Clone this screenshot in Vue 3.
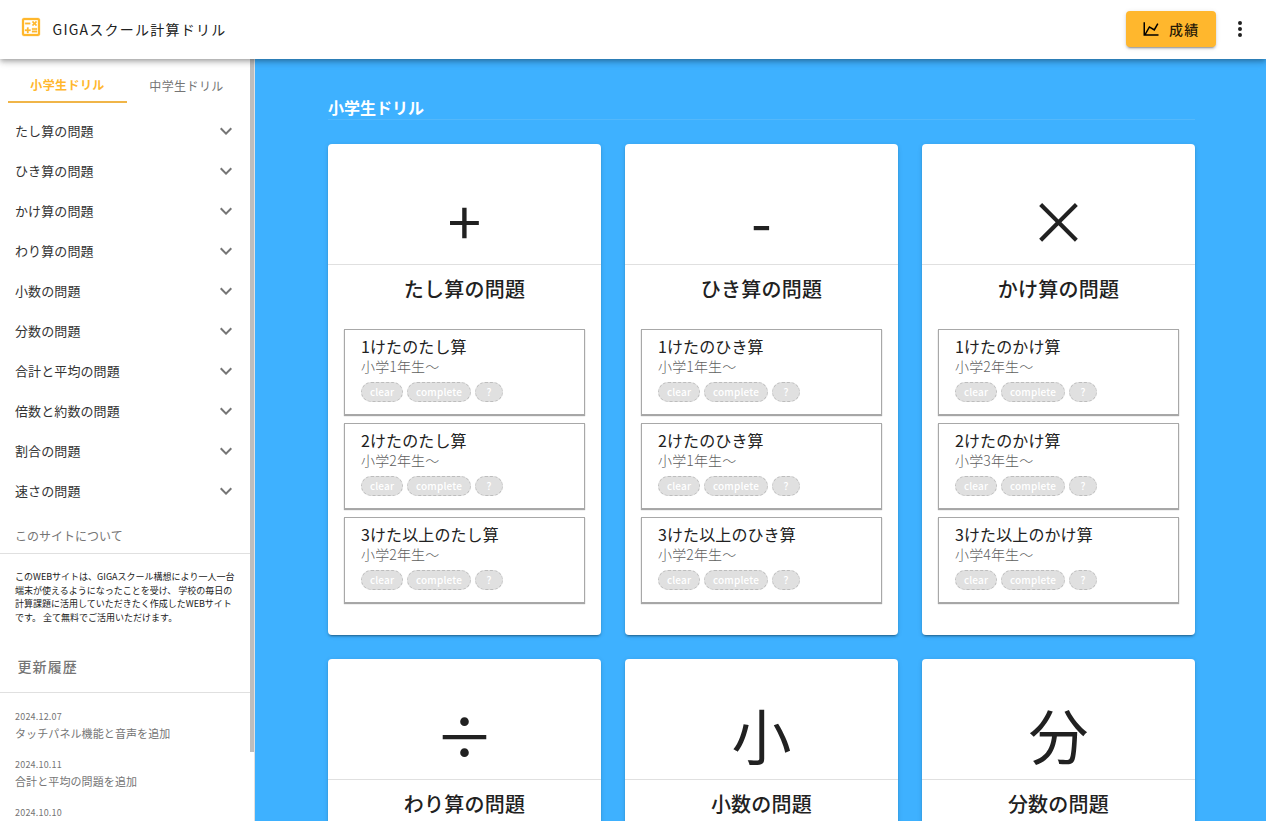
<script setup>
import { ref } from 'vue';

const tabs = ['小学生ドリル', '中学生ドリル'];
const activeTab = ref(0);

const menu = [
  'たし算の問題',
  'ひき算の問題',
  'かけ算の問題',
  'わり算の問題',
  '小数の問題',
  '分数の問題',
  '合計と平均の問題',
  '倍数と約数の問題',
  '割合の問題',
  '速さの問題',
];

const history = [
  { date: '2024.12.07', text: 'タッチパネル機能と音声を追加' },
  { date: '2024.10.11', text: '合計と平均の問題を追加' },
  { date: '2024.10.10', text: '' },
];

const cards = [
  {
    symbol: '+',
    title: 'たし算の問題',
    drills: [
      { name: '1けたのたし算', grade: '小学1年生～' },
      { name: '2けたのたし算', grade: '小学2年生～' },
      { name: '3けた以上のたし算', grade: '小学2年生～' },
    ],
  },
  {
    symbol: '-',
    title: 'ひき算の問題',
    drills: [
      { name: '1けたのひき算', grade: '小学1年生～' },
      { name: '2けたのひき算', grade: '小学1年生～' },
      { name: '3けた以上のひき算', grade: '小学2年生～' },
    ],
  },
  {
    symbol: '×',
    title: 'かけ算の問題',
    drills: [
      { name: '1けたのかけ算', grade: '小学2年生～' },
      { name: '2けたのかけ算', grade: '小学3年生～' },
      { name: '3けた以上のかけ算', grade: '小学4年生～' },
    ],
  },
  { symbol: '÷', title: 'わり算の問題', drills: [] },
  { symbol: '小', title: '小数の問題', drills: [] },
  { symbol: '分', title: '分数の問題', drills: [] },
];

const badges = [
  { name: 'clear', label: 'clear' },
  { name: 'complete', label: 'complete' },
  { name: 'unknown', label: '?' },
];
</script>

<template>
  <div class="app">
    <header class="app-bar">
      <svg class="logo" viewBox="0 0 24 24">
        <path d="M19,3H5C3.9,3 3,3.9 3,5V19C3,20.1 3.9,21 5,21H19C20.1,21 21,20.1 21,19V5C21,3.9 20.1,3 19,3M19,19H5V5H19V19M6.2,7.7H11.2V9.2H6.2V7.7M13,15.8H18V17.3H13V15.8M13,13.2H18V14.7H13V13.2M8,18H9.5V16H11.5V14.5H9.5V12.5H8V14.5H6V16H8V18M14.1,10.9L15.5,9.5L16.9,10.9L18,9.9L16.6,8.5L18,7.1L16.9,6L15.5,7.4L14.1,6L13,7.1L14.4,8.5L13,9.9L14.1,10.9Z" />
      </svg>
      <h1 class="app-title">GIGAスクール計算ドリル</h1>
      <button class="score-button">
        <svg viewBox="0 0 24 24">
          <path d="M16,11.78L20.24,4.45L21.97,5.45L16.74,14.5L10.23,10.75L5.46,19H22V21H2V3H4V17.54L9.5,8L16,11.78Z" />
        </svg>
        <span>成績</span>
      </button>
      <svg class="dots" viewBox="0 0 24 24">
        <path d="M12,16A2,2 0 0,1 14,18A2,2 0 0,1 12,20A2,2 0 0,1 10,18A2,2 0 0,1 12,16M12,10A2,2 0 0,1 14,12A2,2 0 0,1 12,14A2,2 0 0,1 10,12A2,2 0 0,1 12,10M12,4A2,2 0 0,1 14,6A2,2 0 0,1 12,8A2,2 0 0,1 10,6A2,2 0 0,1 12,4Z" />
      </svg>
    </header>

    <div class="body">
      <aside class="sidebar">
        <div class="side-content">
          <!-- Grade tabs -->
          <div class="tabs">
            <div
              v-for="(tab, i) in tabs"
              :key="tab"
              class="tab"
              :class="{ active: i === activeTab }"
              @click="activeTab = i"
            >
              {{ tab }}
            </div>
          </div>

          <!-- Drill menu -->
          <ul class="menu">
            <li v-for="item in menu" :key="item">
              <span>{{ item }}</span>
              <svg viewBox="0 0 24 24">
                <path d="M7.41,8.58L12,13.17L16.59,8.58L18,10L12,16L6,10L7.41,8.58Z" />
              </svg>
            </li>
          </ul>

          <h2 class="about-title">このサイトについて</h2>
          <p class="about">このWEBサイトは、GIGAスクール構想により一人一台端末が使えるようになったことを受け、 学校の毎日の計算課題に活用していただきたく作成したWEBサイトです。 全て無料でご活用いただけます。</p>

          <h2 class="history-title">更新履歴</h2>
          <div class="history">
            <div v-for="item in history" :key="item.date" class="history-item">
              <div class="date">{{ item.date }}</div>
              <div v-if="item.text" class="history-text">{{ item.text }}</div>
            </div>
          </div>
        </div>
        <div class="scroll-track">
          <div class="scroll-thumb"></div>
        </div>
      </aside>

      <main class="main">
        <h2 class="page-title">小学生ドリル</h2>
        <div class="cards">
          <section v-for="card in cards" :key="card.title" class="card">
            <div class="symbol">{{ card.symbol }}</div>
            <h3 class="card-title">{{ card.title }}</h3>
            <div class="drills">
              <div v-for="drill in card.drills" :key="drill.name" class="drill">
                <div class="drill-name">{{ drill.name }}</div>
                <div class="drill-grade">{{ drill.grade }}</div>
                <div class="badges">
                  <span v-for="badge in badges" :key="badge.name" class="badge" :class="badge.name">{{ badge.label }}</span>
                </div>
              </div>
            </div>
          </section>
        </div>
      </main>
    </div>
  </div>
</template>

<style>
body {
  margin: 0;
  overflow: hidden;
}
</style>

<style scoped>
* {
  box-sizing: border-box;
}

.app {
  height: 100vh;
  display: flex;
  flex-direction: column;
  overflow: hidden;
  font-family: "Noto Sans CJK JP", sans-serif;
  color: #212121;
  background: #fff;
}

.app-bar {
  position: relative;
  z-index: 1;
  flex: none;
  height: 59px;
  display: flex;
  align-items: center;
  padding: 0 14px 1px 19px;
  background: #fff;
  box-shadow: 0 2px 4px -1px rgba(0, 0, 0, 0.2), 0 4px 5px rgba(0, 0, 0, 0.14), 0 1px 10px rgba(0, 0, 0, 0.12);
}

.logo {
  width: 24px;
  height: 24px;
  margin-bottom: 4px;
  fill: #ffb72d;
  stroke: #ffb72d;
  stroke-width: 0.3;
}

.app-title {
  flex: 1;
  margin: 0 0 0 9.5px;
  font-size: 14px;
  line-height: 20px;
  font-weight: 400;
  letter-spacing: 1.25px;
}

.score-button {
  display: flex;
  align-items: center;
  width: 90px;
  height: 36px;
  padding: 0 0 0 16px;
  border: none;
  border-radius: 4px;
  background: #ffb72d;
  color: rgba(0, 0, 0, 0.87);
  font-family: inherit;
  font-size: 14px;
  font-weight: 500;
  letter-spacing: 1.25px;
  box-shadow: 0 3px 1px -2px rgba(0, 0, 0, 0.2), 0 2px 2px rgba(0, 0, 0, 0.14), 0 1px 5px rgba(0, 0, 0, 0.12);
}

.score-button svg {
  width: 18px;
  height: 18px;
  margin-right: 9px;
}

.score-button span {
  padding-bottom: 1px;
}

.dots {
  width: 24px;
  height: 24px;
  margin-left: 12px;
  fill: #212121;
}

.body {
  flex: 1;
  min-height: 0;
  display: flex;
}

.sidebar {
  flex: none;
  width: 255px;
  display: flex;
  overflow: hidden;
  border-right: 1px solid #e0e0e0;
}

.side-content {
  width: 250px;
}

.scroll-track {
  width: 4px;
  height: 762px;
}

.scroll-thumb {
  height: 693px;
  background: #bdbdbd;
}

.tabs {
  display: flex;
  padding: 8px 8px 0;
}

.tab {
  flex: none;
  width: 119px;
  height: 36px;
  border-bottom: 2px solid transparent;
  font-size: 12px;
  line-height: 38px;
  letter-spacing: 0.4px;
  text-align: center;
  color: #757575;
}

.tab.active {
  line-height: 36px;
  font-weight: 700;
  color: #ffb72d;
  border-color: #f0b548;
}

.menu {
  margin: 8px 0 0;
  padding: 0;
  list-style: none;
}

.menu li {
  display: flex;
  align-items: center;
  justify-content: space-between;
  height: 40px;
  padding: 0 12px 0 15px;
  font-size: 13px;
  letter-spacing: 0.1px;
  color: #333;
}

.menu span {
  padding-bottom: 2px;
}

.menu svg {
  width: 24px;
  height: 24px;
  fill: #757575;
}

.about-title {
  width: 254px;
  height: 43px;
  margin: 0;
  padding: 16px 0 0 15px;
  border-bottom: 1px solid #e0e0e0;
  font-size: 12px;
  line-height: 18px;
  font-weight: 400;
  color: #757575;
}

.about {
  margin: 16px 0 0;
  padding: 0 15px;
  width: 254px;
  font-size: 9px;
  line-height: 13.6px;
}

.history-title {
  width: 254px;
  height: 69px;
  margin: 0;
  padding: 32px 0 0 17.5px;
  border-bottom: 1px solid #e0e0e0;
  font-size: 14px;
  line-height: 20px;
  font-weight: 500;
  letter-spacing: 1.1px;
  color: #757575;
}

.history {
  padding: 16px 0 0 15px;
  color: #757575;
}

.history-item {
  height: 48px;
}

.date {
  font-size: 9px;
  line-height: 16px;
  letter-spacing: 0.2px;
}

.history-text {
  font-size: 11px;
  line-height: 17px;
  letter-spacing: 0.1px;
}

.main {
  flex: 1;
  min-width: 0;
  padding: 37px 71px 0 73px;
  background: #3eb1ff;
}

.page-title {
  height: 24px;
  margin: 0 0 24px;
  border-bottom: 1px solid #54b8fb;
  font-size: 16px;
  line-height: 22px;
  font-weight: 700;
  color: #fff;
}

.cards {
  display: grid;
  grid-template-columns: repeat(3, 273px);
  gap: 24px;
}

.card {
  height: 491px;
  background: #fff;
  border-radius: 4px;
  box-shadow: 0 3px 1px -2px rgba(0, 0, 0, 0.2), 0 2px 2px rgba(0, 0, 0, 0.14), 0 1px 5px rgba(0, 0, 0, 0.12);
}

.symbol {
  height: 121px;
  padding-top: 31px;
  border-bottom: 1px solid #e0e0e0;
  font-size: 60px;
  line-height: 88px;
  text-align: center;
}

.card-title {
  margin: 0;
  height: 64px;
  padding-top: 8px;
  font-size: 20px;
  line-height: 32px;
  font-weight: 500;
  letter-spacing: 0.25px;
  text-align: center;
}

.drills {
  display: flex;
  flex-direction: column;
  gap: 8px;
  padding: 0 16px;
}

.drill {
  height: 86px;
  padding: 7px 16px;
  border: 1px solid #a8a8a8;
  box-shadow: 0 1px 1px rgba(0, 0, 0, 0.35);
}

.drill-name {
  font-size: 16px;
  line-height: 19px;
  letter-spacing: 0.1px;
}

.drill-grade {
  margin-top: 1px;
  font-size: 14px;
  line-height: 18px;
  font-weight: 300;
  letter-spacing: 0.15px;
  color: #606060;
}

.badges {
  display: flex;
  gap: 4px;
  margin-top: 7px;
}

.badge {
  height: 20px;
  border: 1px dashed #bdbdbd;
  border-radius: 10px;
  background: #e0e0e0;
  color: #fff;
  font-size: 10px;
  line-height: 18px;
  font-weight: 500;
  letter-spacing: 0.15px;
  text-align: center;
}

.badge.clear {
  width: 42px;
}

.badge.complete {
  width: 64px;
}

.badge.unknown {
  width: 28px;
}
</style>
